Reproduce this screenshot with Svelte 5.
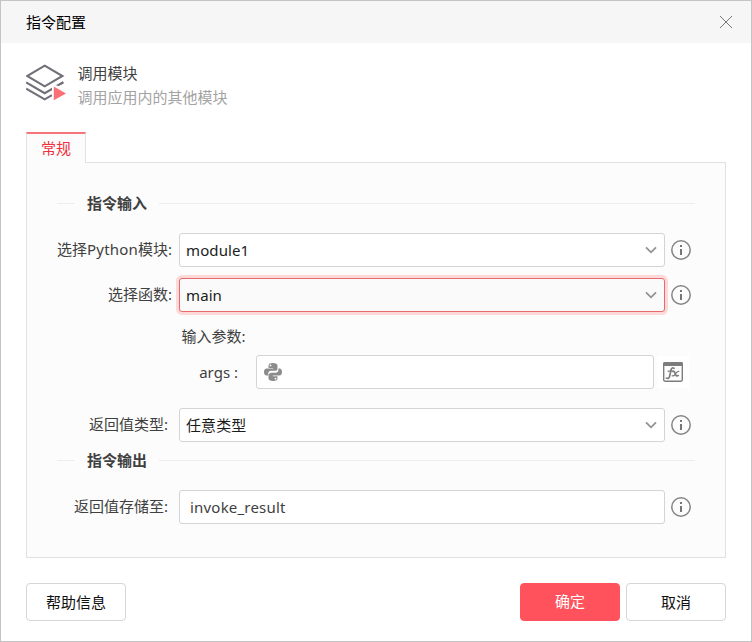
<script>
	let moduleName = $state('module1')
	let functionName = $state('main')
	let returnType = $state('任意类型')
	let args = $state('')
	let resultName = $state('invoke_result')
</script>

{#snippet infoIcon()}
	<svg class="info-icon" viewBox="0 0 20 20" width="20" height="20">
		<circle cx="10" cy="10" r="9.2" fill="none" stroke="#858585" stroke-width="1.5" />
		<rect x="9" y="5" width="2" height="2" fill="#757575" />
		<rect x="9" y="9" width="2" height="6" fill="#757575" />
	</svg>
{/snippet}

{#snippet select(value, active = false)}
	<button type="button" class="control select" class:active>
		<span class="value">{value}</span>
		<svg viewBox="0 0 12 8" width="12" height="8">
			<path d="M1 1.3 6 6.3 11 1.3" fill="none" stroke="#929292" stroke-width="1.8" />
		</svg>
	</button>
{/snippet}

<div class="dialog">
	<header class="title-bar">
		<h1>指令配置</h1>
		<button type="button" class="close-button" aria-label="关闭">
			<svg viewBox="0 0 12 12" width="12" height="12">
				<path d="M0 0 12 12M12 0 0 12" stroke="#777" stroke-width="1" />
			</svg>
		</button>
	</header>

	<section class="intro">
		<svg viewBox="0 0 40 38" width="40" height="38">
			<g fill="none" stroke="#707078" stroke-width="2.1">
				<path d="M18.7 1.6 36.4 12 18.7 22.3 1.1 12Z" />
				<path d="M.2 18.3 18.7 29.2 37.3 18.3" />
				<path d="M.2 24.6 18.7 35.4 26 31.2" />
			</g>
			<path d="M26 21.5H40V37H26Z" fill="#fff" />
			<path d="M31.5 21.5 37.3 18.2" stroke="#707078" stroke-width="2" />
			<path d="M27.8 22.6 40 29.4 27.8 36.2Z" fill="#fb7074" />
		</svg>
		<div>
			<h2>调用模块</h2>
			<p>调用应用内的其他模块</p>
		</div>
	</section>

	<nav class="tabs">
		<button type="button" class="tab">常规</button>
	</nav>

	<main class="panel">
		<h3 class="legend">指令输入</h3>
		<div class="field">
			<span class="label">选择<span class="latin">Python</span>模块:</span>
			{@render select(moduleName)}
			{@render infoIcon()}
		</div>
		<div class="field">
			<span class="label">选择函数:</span>
			{@render select(functionName, true)}
			{@render infoIcon()}
		</div>

		<div class="params">
			<p>输入参数:</p>
			<div class="param">
				<span class="param-label">args :</span>
				<label class="control param-input">
					<svg viewBox="0 0 24 24" width="18" height="18">
						<path fill="#8c8c8c" d="M11.9 0C7.6 0 6 1.5 6 3.7v2.8h6.2v.9H3.6C1.2 7.4 0 9.2 0 12s1.2 4.8 3.4 4.8h2.3v-3c0-2 1.6-3.5 3.6-3.5h5.6c1.8 0 3.1-1.3 3.1-3.1V3.7C18 1.4 16 0 11.9 0ZM8.7 2a1.2 1.2 0 1 1 0 2.4 1.2 1.2 0 0 1 0-2.4Z" />
						<path fill="#8c8c8c" d="M12.1 24c4.3 0 5.9-1.5 5.9-3.7v-2.8h-6.2v-.9h8.6c2.4 0 3.6-1.8 3.6-4.6s-1.2-4.8-3.4-4.8h-1.4v2.2c0 2-1.6 3.5-3.6 3.5H10c-1.8 0-4 1.3-4 3.1v4.3C6 22.6 8 24 12.1 24Zm3.2-2a1.2 1.2 0 1 1 0-2.4 1.2 1.2 0 0 1 0 2.4Z" />
					</svg>
					<input type="text" aria-label="args" bind:value={args} />
				</label>
				<button type="button" class="fx-button" aria-label="表达式">
					<svg viewBox="0 0 20 20" width="20" height="20">
						<rect x=".7" y=".7" width="18.6" height="18.6" rx="1.6" fill="#fff" stroke="#7d7d7d" stroke-width="1.4" />
						<path d="M0 4V1.6Q0 0 1.6 0H18.4Q20 0 20 1.6V4Z" fill="#7d7d7d" />
						<g fill="none" stroke="#7d7d7d" stroke-linecap="round">
							<path d="M11 6.3C9.4 5.3 8.4 6.2 8 8L6.6 14.4C6.2 16.2 5 16.9 3.4 16.1" stroke-width="1.7" />
							<path d="M5 9.2H10.3" stroke-width="1.2" />
							<path d="M9.9 9.4C11.5 8.8 11.8 10.4 12.3 12S13.6 14.5 15.3 13.6" stroke-width="1.7" />
							<path d="M15.8 9.4C14.4 8.9 13.4 10.5 12.3 12S10.6 14.5 9.2 13.7" stroke-width="1.3" />
						</g>
					</svg>
				</button>
			</div>
		</div>

		<div class="field">
			<span class="label spaced">返回值类型:</span>
			{@render select(returnType)}
			{@render infoIcon()}
		</div>

		<h3 class="legend output">指令输出</h3>
		<div class="field">
			<span class="label spaced">返回值存储至:</span>
			<input type="text" class="control result" aria-label="返回值存储至" bind:value={resultName} />
			{@render infoIcon()}
		</div>
	</main>

	<footer class="actions">
		<button type="button" class="button help">帮助信息</button>
		<button type="button" class="button primary">确定</button>
		<button type="button" class="button">取消</button>
	</footer>
</div>

<style>
	:global(body) {
		margin: 0;
		background: #fff;
	}

	.dialog {
		box-sizing: border-box;
		width: 752px;
		height: 642px;
		border: 1px solid #c4c4c4;
		background: #fff;
		color: #404040;
		font: 15px/22px "Noto Sans", "Noto Sans CJK SC", sans-serif;
	}

	.dialog * {
		box-sizing: border-box;
	}

	h1,
	h2,
	h3,
	p {
		margin: 0;
		font-size: 15px;
		font-weight: 400;
	}

	button,
	input {
		font: inherit;
		color: inherit;
		border: none;
		padding: 0;
		background: none;
		outline: none;
	}

	svg {
		display: block;
		flex: none;
	}

	.title-bar {
		display: flex;
		align-items: center;
		justify-content: space-between;
		height: 42px;
		padding: 0 19px 0 25px;
		background: #f6f6f6;
		color: #000;
	}

	.intro {
		display: flex;
		gap: 12px;
		padding: 20px 25px 0 24.5px;
	}

	.intro svg {
		margin-top: 1px;
	}

	.intro h2,
	.intro p {
		line-height: 24px;
	}

	.intro > div {
		height: 49px;
		margin-top: -2px;
	}

	.intro p {
		color: #a3a3a3;
	}

	.tabs {
		margin: 22px 25px 0;
		height: 30px;
	}

	.tab {
		position: relative;
		z-index: 1;
		display: block;
		width: 60px;
		height: 31px;
		padding-bottom: 2px;
		border: 1px solid #e2e2e2;
		border-top: 2px solid #f77478;
		border-bottom: none;
		background: #fcfcfc;
		color: #f0303c;
	}

	.panel {
		height: 396px;
		margin: 0 25px;
		padding: 29px 30px 0;
		border: 1px solid #e2e2e2;
		background: #fcfcfc;
	}

	.legend {
		display: flex;
		align-items: center;
		gap: 12px;
		height: 22px;
		margin-bottom: 19px;
		font-weight: 700;
	}

	.legend::before,
	.legend::after {
		content: "";
		width: 18px;
		height: 1px;
		background: #eee;
	}

	.legend::after {
		flex: 1;
	}

	.legend.output {
		margin-top: 7px;
	}

	.field {
		display: flex;
		align-items: center;
		height: 34px;
	}

	.field + .field {
		margin-top: 11px;
	}

	.label {
		width: 122px;
		margin: 0 7px 0 -7px;
		padding-bottom: 2px;
		text-align: right;
		white-space: nowrap;
	}

	.label.spaced {
		padding-right: 4px;
	}

	.latin {
		letter-spacing: 0.2px;
	}

	.control {
		display: flex;
		align-items: center;
		width: 486px;
		height: 34px;
		border: 1px solid #d4d4d4;
		border-radius: 3px;
		background: #fff;
	}

	.select {
		justify-content: space-between;
		padding: 0 7px 1px 6px;
		color: #1c1c1c;
	}

	.value {
		letter-spacing: 0.1px;
	}

	.select.active {
		border-color: #e56a6e;
		background: #fafafa;
		box-shadow: 0 0 0 3px #ffd8d8;
	}

	.info-icon {
		margin-left: 6px;
	}

	.result {
		padding: 0 10px;
		letter-spacing: 0.2px;
	}

	.params {
		padding: 13px 0 0 124.5px;
		margin-bottom: 19px;
	}

	.params p {
		height: 24px;
		margin-bottom: 6px;
		line-height: 22px;
	}

	.param {
		display: flex;
		align-items: center;
		margin-right: -1px;
	}

	.param-label {
		width: 56.5px;
		margin-right: 18px;
		text-align: right;
	}

	.param-input {
		width: 398px;
		padding-left: 7px;
		gap: 6px;
	}

	.param-input input {
		flex: 1;
	}

	.fx-button {
		display: grid;
		place-items: center;
		flex: none;
		width: 32px;
		height: 32px;
		margin-left: 3px;
		background: #fff;
	}

	.actions {
		display: flex;
		gap: 6px;
		margin: 25px 25px 0;
	}

	.button {
		width: 100px;
		height: 38px;
		border: 1px solid #d6d6d6;
		border-radius: 4px;
		background: #fff;
		color: #111;
	}

	.button.help {
		margin-right: auto;
	}

	.button.primary {
		padding-bottom: 2px;
		border-color: #ff525c;
		background: #ff525c;
		color: #fff;
	}
</style>
